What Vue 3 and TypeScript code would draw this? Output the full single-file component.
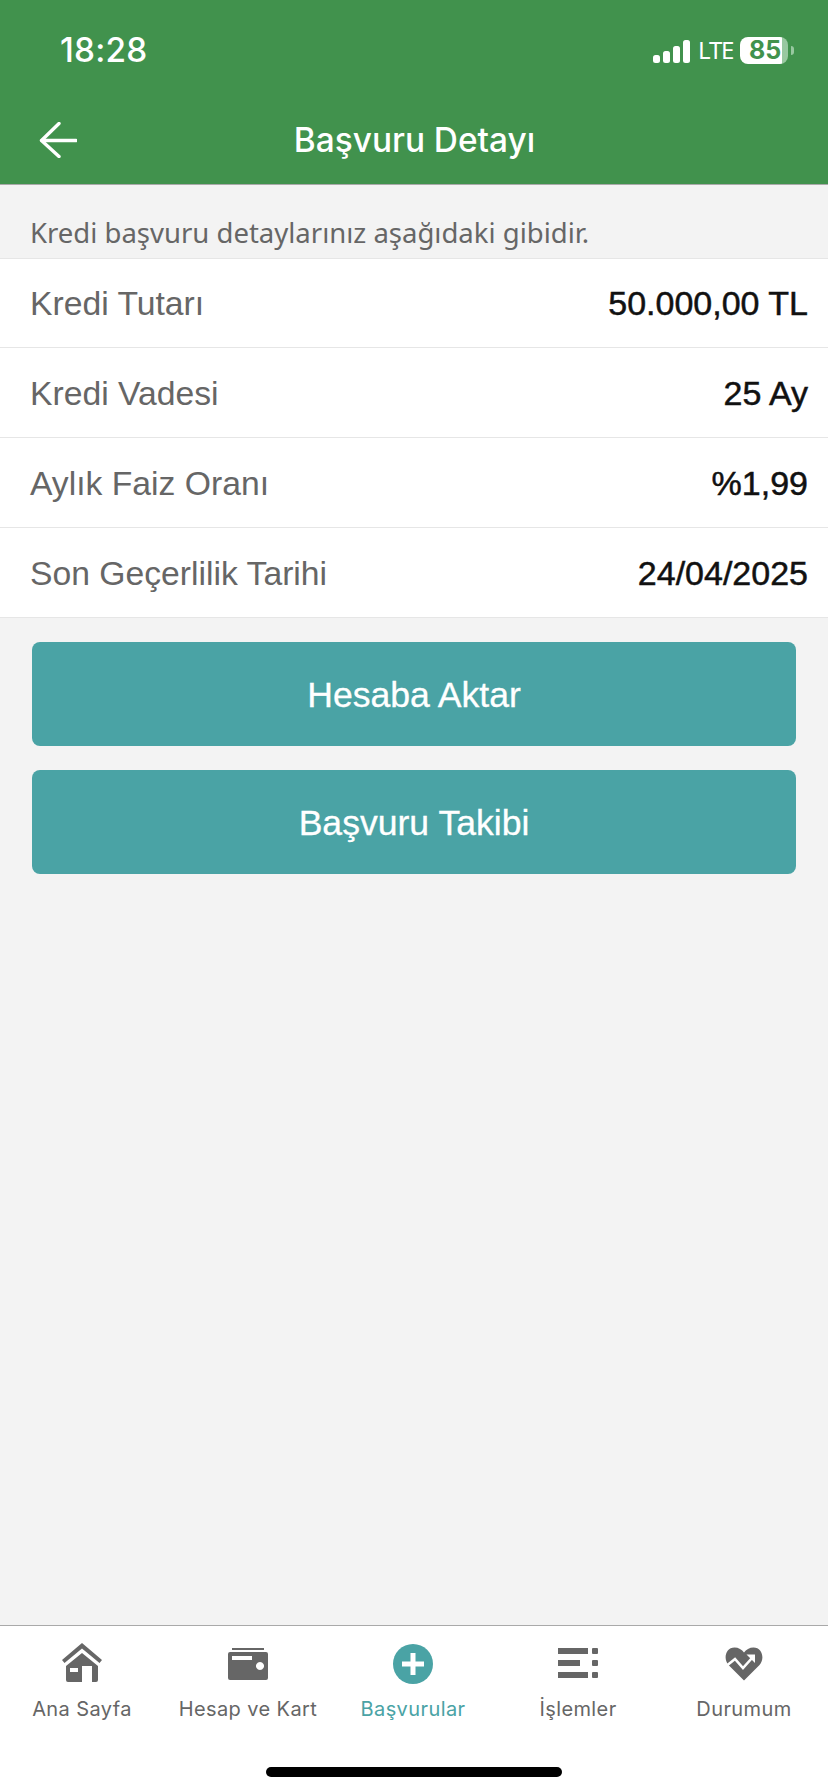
<script setup lang="ts">
interface Row { label: string; value: string }
const rows: Row[] = [
  { label: 'Kredi Tutarı', value: '50.000,00 TL' },
  { label: 'Kredi Vadesi', value: '25 Ay' },
  { label: 'Aylık Faiz Oranı', value: '%1,99' },
  { label: 'Son Geçerlilik Tarihi', value: '24/04/2025' },
]
const bars = [8, 12, 17, 23]
</script>

<template>
  <div class="page">
    <header class="top">
      <div class="status">
        <span class="time">18:28</span>
        <div class="indicators">
          <div class="signal">
            <i v-for="h in bars" :key="h" class="bar" :style="{ height: h + 'px' }"></i>
          </div>
          <span class="lte">LTE</span>
          <div class="battery"><span class="level">85</span></div>
          <i class="nub"></i>
        </div>
      </div>
      <div class="nav">
        <svg class="back" width="38" height="36" viewBox="0 0 38 36" fill="none" stroke="#fff" stroke-width="3.4" stroke-linecap="round" stroke-linejoin="round">
          <path d="M37 18.5H3" />
          <path d="M20 1.500L2.500 18.500L20 34.500" />
        </svg>
        <h1 class="title">Başvuru Detayı</h1>
      </div>
    </header>

    <main class="main">
      <p class="intro">Kredi başvuru detaylarınız aşağıdaki gibidir.</p>
      <ul class="list">
        <li v-for="r in rows" :key="r.label" class="row">
          <span class="label">{{ r.label }}</span>
          <span class="value">{{ r.value }}</span>
        </li>
      </ul>
      <div class="actions">
        <button class="btn">Hesaba Aktar</button>
        <button class="btn">Başvuru Takibi</button>
      </div>
    </main>

    <footer class="tabs">
      <div class="tabrow">
        <div class="tab">
          <svg width="42" height="40" viewBox="0 0 42 40" fill="#666">
            <path d="M21 0L41 17L38.500 20L21 5.500L3.500 20L1 17Z" />
            <path fill-rule="evenodd" d="M21 10L37 23V37a2 2 0 0 1-2 2H31V23H21V39H7a2 2 0 0 1-2-2V23ZM9 25V29H17V25Z" />
          </svg>
          <span class="tablabel">Ana Sayfa</span>
        </div>
        <div class="tab">
          <svg width="42" height="40" viewBox="0 0 42 40" fill="#666">
            <rect x="5" y="5" width="32" height="2" />
            <path fill-rule="evenodd" d="M3 9H39a2 2 0 0 1 2 2V35a2 2 0 0 1-2 2H3a2 2 0 0 1-2-2V11a2 2 0 0 1 2-2ZM5 13V17H25V13ZM33 19a4 4 0 1 0 .01 0Z" />
          </svg>
          <span class="tablabel">Hesap ve Kart</span>
        </div>
        <div class="tab">
          <svg width="42" height="40" viewBox="-1 -1 42 40">
            <circle cx="20" cy="20" r="20" fill="#4aa3a5" />
            <path d="M20 9V31M9 20H31" stroke="#fff" stroke-width="5" />
          </svg>
          <span class="tablabel active">Başvurular</span>
        </div>
        <div class="tab">
          <svg width="42" height="40" viewBox="0 0 42 40" fill="#666">
            <rect x="1" y="5" width="30" height="6" />
            <rect x="35" y="5" width="6" height="6" rx="1" />
            <rect x="1" y="17" width="22" height="6" />
            <rect x="35" y="17" width="6" height="6" rx="1" />
            <rect x="1" y="29" width="30" height="6" />
            <rect x="35" y="29" width="6" height="6" rx="1" />
          </svg>
          <span class="tablabel">İşlemler</span>
        </div>
        <div class="tab">
          <svg width="42" height="40" viewBox="0 0 42 40">
            <path fill="#666" d="M21 37.500L5.500 22C0 16 2.500 4.500 11.500 4.500C15.500 4.500 19 6.500 21 9.500C23 6.500 26.500 4.500 30.500 4.500C39.500 4.500 42 16 36.500 22Z" />
            <path fill="none" stroke="#fff" stroke-width="2.600" d="M2 24L12 16L20 25L29 15" />
            <path fill="#fff" d="M23.500 11.500H32V20Z" />
          </svg>
          <span class="tablabel">Durumum</span>
        </div>
      </div>
      <div class="homewrap"><i class="home"></i></div>
    </footer>
  </div>
</template>

<style>
html, body { margin: 0; padding: 0; }
</style>

<style scoped>
.page {
  width: 828px;
  height: 1792px;
  display: flex;
  flex-direction: column;
  background: #f3f3f3;
  overflow: hidden;
}
.top {
  background: #41924d;
  height: 184px;
  border-bottom: 1px solid #a9a9a9;
  color: #fff;
  flex: none;
}
.status {
  height: 94px;
  display: flex;
  align-items: flex-start;
  justify-content: space-between;
  padding: 0 34px 0 60px;
  box-sizing: border-box;
}
.time {
  font: 500 33.300px/40px Inter, sans-serif;
  margin-top: 30px;
  letter-spacing: 0.2px;
}
.indicators {
  display: flex;
  align-items: center;
  height: 28px;
  margin-top: 36px;
}
.signal { display: flex; align-items: flex-end; gap: 3px; height: 25px; }
.bar { width: 7px; background: #fff; border-radius: 2.500px; display: block; }
.lte {
  font: 400 24px/28px "Noto Sans", sans-serif;
  margin-left: 8px;
  width: 34px;
  letter-spacing: -1.200px;
}
.battery {
  margin-left: 8px;
  width: 48px;
  height: 27px;
  border-radius: 8px;
  background: linear-gradient(90deg, #fff 0, #fff 42px, #98c8a0 42px);
  display: flex;
  align-items: center;
  padding-left: 9px;
  box-sizing: border-box;
}
.level {
  font: 700 25px/27px Inter, sans-serif;
  color: #41924d;
}
.nub {
  width: 3px;
  height: 9px;
  margin-left: 3px;
  background: #98c8a0;
  border-radius: 0 3px 3px 0;
}
.nav {
  height: 89px;
  display: flex;
  align-items: center;
  justify-content: center;
  position: relative;
}
.back { position: absolute; left: 39px; top: 28px; }
.title {
  margin: 2px 0 0 1px;
  font: 500 33.400px/40px Inter, sans-serif;
}
.main { flex: 1; min-height: 0; }
.intro {
  margin: 0;
  height: 73px;
  box-sizing: border-box;
  padding: 30px 0 0 30px;
  font: 400 27.500px/36px "Noto Sans", sans-serif;
  color: #666;
}
.list {
  list-style: none;
  margin: 0;
  padding: 0;
  background: #fff;
  border-top: 1px solid #e6e6e6;
}
.row {
  height: 90px;
  box-sizing: border-box;
  border-bottom: 1px solid #e6e6e6;
  display: flex;
  align-items: center;
  justify-content: space-between;
  padding: 0 20px 0 30px;
}
.row:first-child { height: 89px; }
.label {
  font: 400 33.700px/40px "Liberation Sans", Arial, sans-serif;
  color: #666;
}
.value {
  font: 400 34px/40px "Liberation Sans", Arial, sans-serif;
  color: #111;
  -webkit-text-stroke: 0.500px #111;
}
.actions {
  display: flex;
  flex-direction: column;
  gap: 24px;
  padding: 24px 32px 0;
}
.btn {
  height: 104px;
  border: 0;
  border-radius: 8px;
  background: #4aa3a5;
  color: #fff;
  font: 400 35.600px/40px "Liberation Sans", Arial, sans-serif;
  -webkit-text-stroke: 0.300px #fff;
  padding: 2px 0 0;
}
.tabs {
  flex: none;
  height: 167px;
  background: #fff;
  border-top: 1px solid #a9a9a9;
  box-sizing: border-box;
}
.tabrow {
  display: grid;
  grid-template-columns: 164px 168px 162px 168px 164px;
  height: 141px;
  padding-top: 17px;
  box-sizing: border-box;
}
.tab {
  display: flex;
  flex-direction: column;
  align-items: center;
}
.tab svg { display: block; flex: none; overflow: visible; }
.tablabel {
  margin-top: 12px;
  font: 400 20px/28px Inter, sans-serif;
  letter-spacing: 0.400px;
  color: #666;
  white-space: nowrap;
}
.tablabel.active { color: #4aa3a5; }
.homewrap { display: flex; justify-content: center; }
.home {
  display: block;
  width: 296px;
  height: 10px;
  background: #000;
  border-radius: 5px;
}
</style>
